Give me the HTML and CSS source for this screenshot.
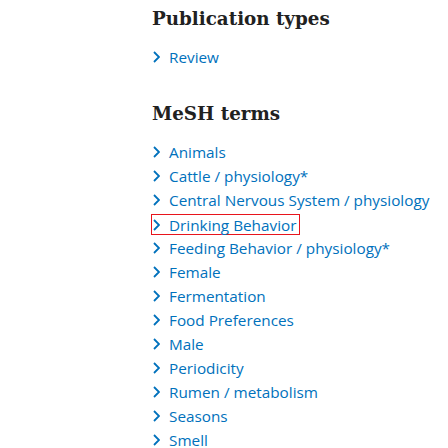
FILE: index.html
```html
<!DOCTYPE html>
<html>
<head>
<meta charset="utf-8">
<link rel="stylesheet" href="styles.css">
</head>
<body>
<main class="page">
  <section class="section">
    <h2 class="heading">Publication types</h2>
    <ul class="terms">
      <li class="term"><svg class="chev" viewBox="0 0 7 12"><path d="M1 1 L6 6 L1 11"/></svg><a href="#">Review</a></li>
    </ul>
  </section>
  <section class="section">
    <h2 class="heading">MeSH terms</h2>
    <ul class="terms">
      <li class="term"><svg class="chev" viewBox="0 0 7 12"><path d="M1 1 L6 6 L1 11"/></svg><a href="#">Animals</a></li>
      <li class="term"><svg class="chev" viewBox="0 0 7 12"><path d="M1 1 L6 6 L1 11"/></svg><a href="#">Cattle / physiology*</a></li>
      <li class="term"><svg class="chev" viewBox="0 0 7 12"><path d="M1 1 L6 6 L1 11"/></svg><a href="#">Central Nervous System / physiology</a></li>
      <li class="term"><span class="highlight"><svg class="chev" viewBox="0 0 7 12"><path d="M1 1 L6 6 L1 11"/></svg><a href="#">Drinking Behavior</a></span></li>
      <li class="term"><svg class="chev" viewBox="0 0 7 12"><path d="M1 1 L6 6 L1 11"/></svg><a href="#">Feeding Behavior / physiology*</a></li>
      <li class="term"><svg class="chev" viewBox="0 0 7 12"><path d="M1 1 L6 6 L1 11"/></svg><a href="#">Female</a></li>
      <li class="term"><svg class="chev" viewBox="0 0 7 12"><path d="M1 1 L6 6 L1 11"/></svg><a href="#">Fermentation</a></li>
      <li class="term"><svg class="chev" viewBox="0 0 7 12"><path d="M1 1 L6 6 L1 11"/></svg><a href="#">Food Preferences</a></li>
      <li class="term"><svg class="chev" viewBox="0 0 7 12"><path d="M1 1 L6 6 L1 11"/></svg><a href="#">Male</a></li>
      <li class="term"><svg class="chev" viewBox="0 0 7 12"><path d="M1 1 L6 6 L1 11"/></svg><a href="#">Periodicity</a></li>
      <li class="term"><svg class="chev" viewBox="0 0 7 12"><path d="M1 1 L6 6 L1 11"/></svg><a href="#">Rumen / metabolism</a></li>
      <li class="term"><svg class="chev" viewBox="0 0 7 12"><path d="M1 1 L6 6 L1 11"/></svg><a href="#">Seasons</a></li>
      <li class="term"><svg class="chev" viewBox="0 0 7 12"><path d="M1 1 L6 6 L1 11"/></svg><a href="#">Smell</a></li>
    </ul>
  </section>
</main>
</body>
</html>
```

FILE: styles.css
```css
html, body {
  margin: 0;
  padding: 0;
  background: #ffffff;
  overflow: hidden;
}
.page {
  padding: 6px 0 0 152px;
  font-family: "Open Sans", "Noto Sans", sans-serif;
}
.section {
  margin-bottom: 32px;
}
.heading {
  margin: 0 0 13px 0;
  font-family: "DejaVu Serif", "Liberation Serif", serif;
  font-weight: bold;
  font-size: 18.3px;
  line-height: 26px;
  color: #212121;
}
.terms {
  list-style: none;
  margin: 0;
  padding: 0;
}
.term {
  display: flex;
  align-items: center;
  height: 24px;
  font-size: 15.3px;
  white-space: nowrap;
}
.highlight {
  display: inline-flex;
  align-items: center;
  border: 1px solid #e8141c;
  margin: 1px 0 0 -1px;
  padding: 0 3px 0 0;
  height: 19px;
}
.chev {
  width: 7px;
  height: 12px;
  margin: 0 9px 0 1px;
  flex: none;
}
.chev path {
  fill: none;
  stroke: #0071bc;
  stroke-width: 1.8;
}
.term a {
  color: #0071bc;
  text-decoration: none;
}
```
